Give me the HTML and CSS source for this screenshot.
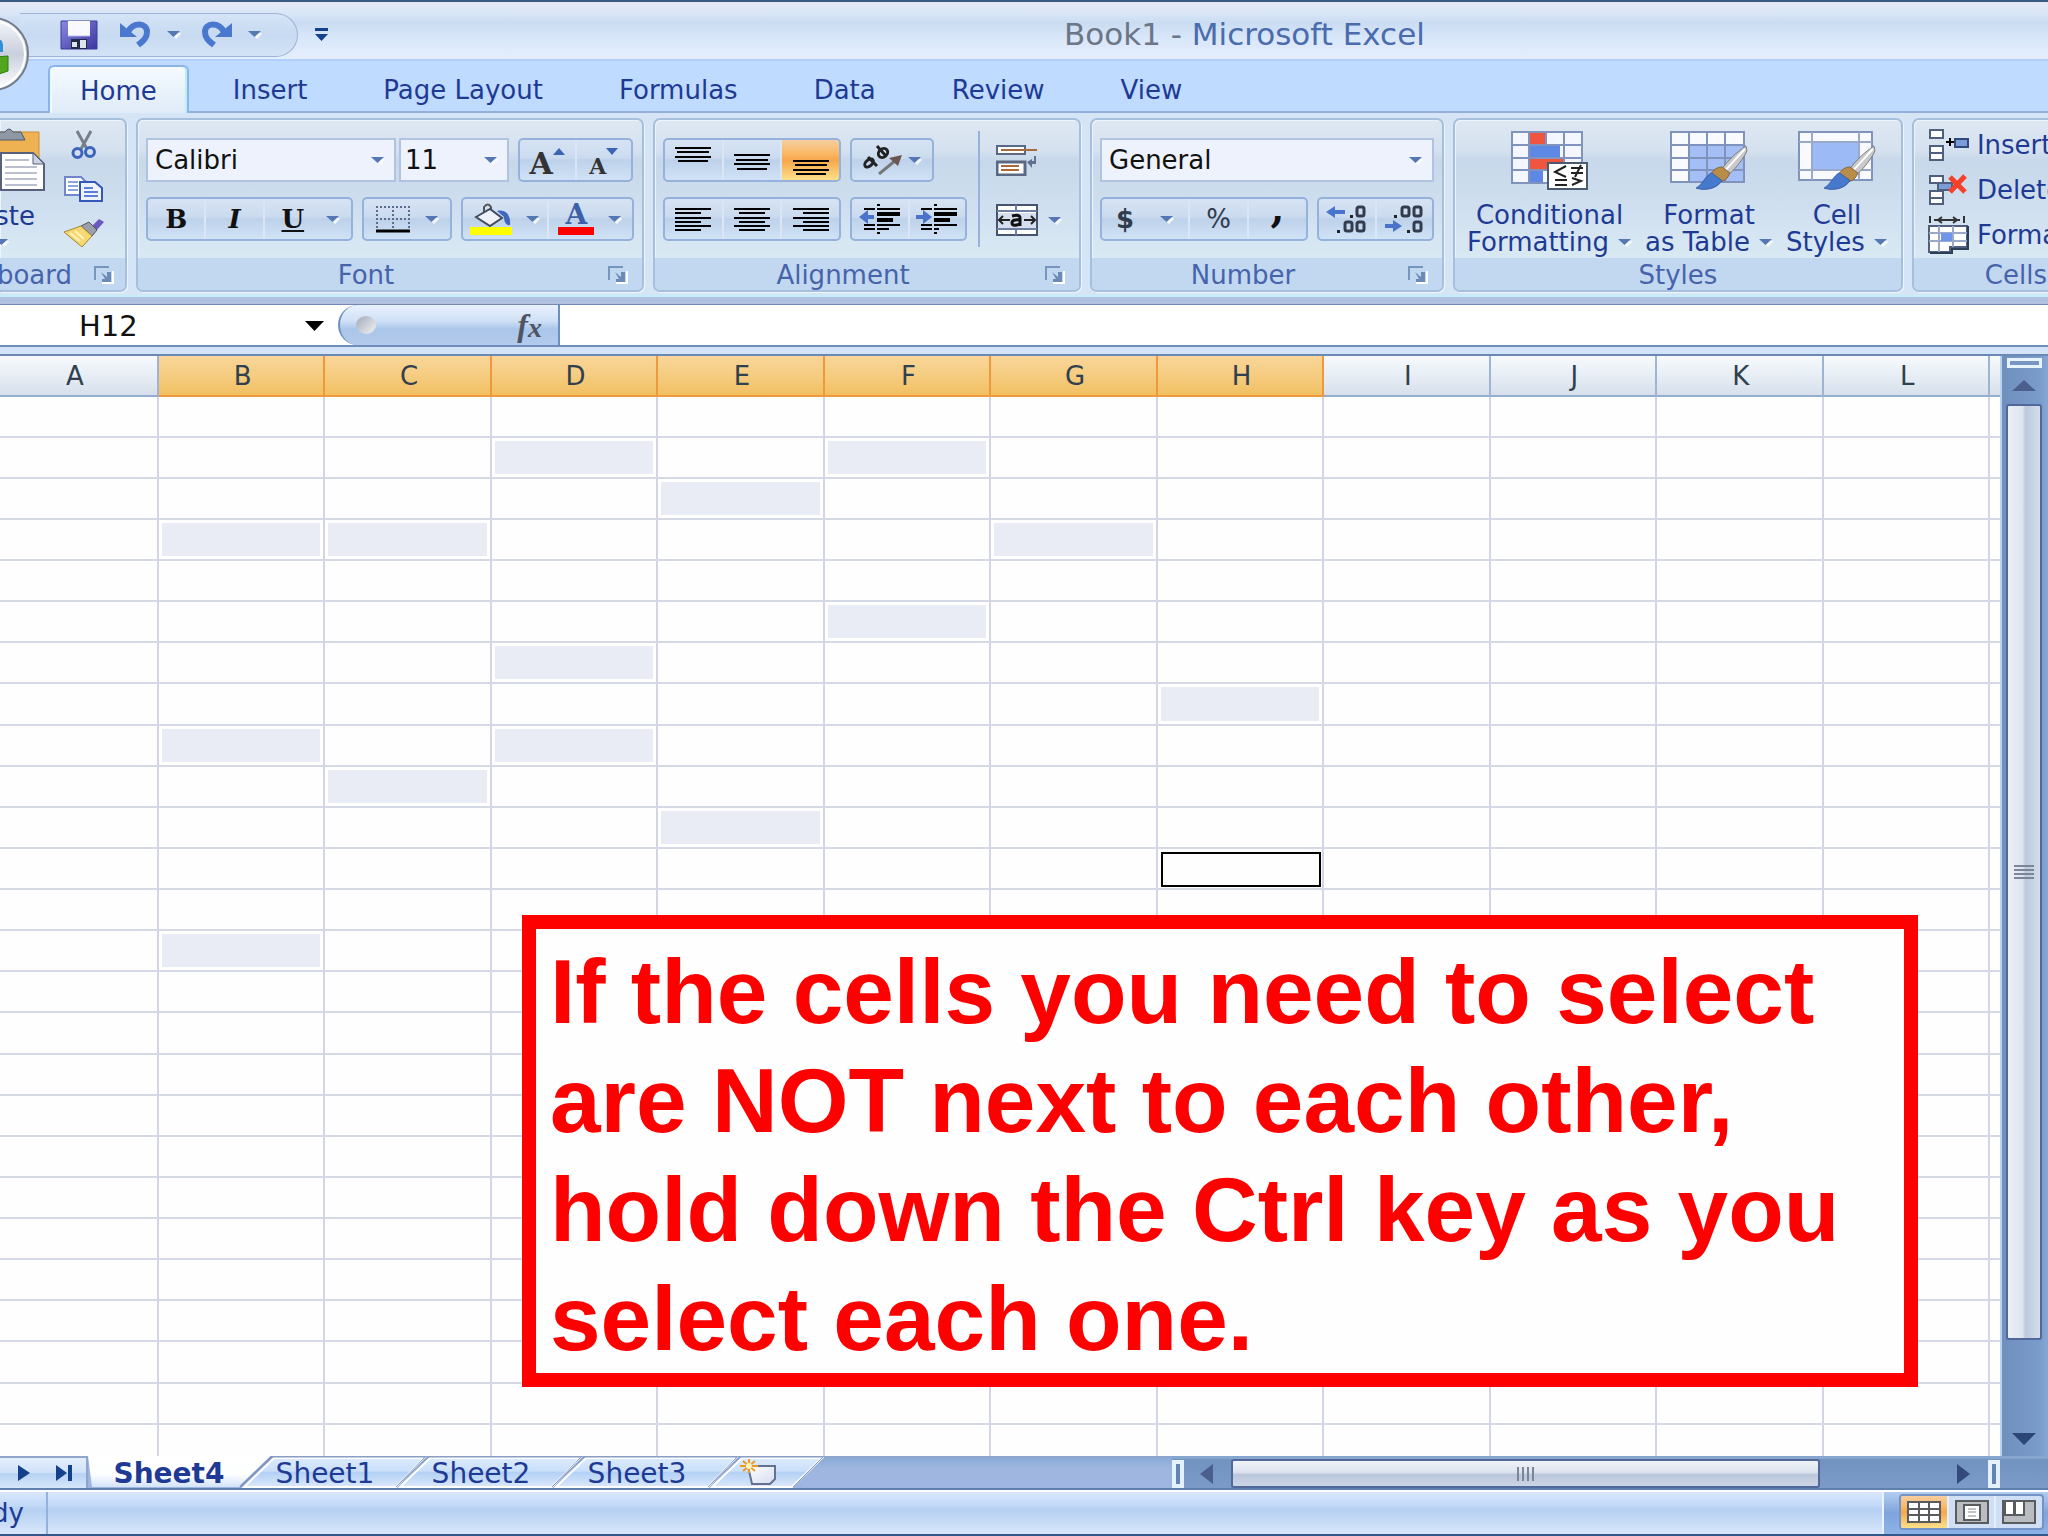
FILE: index.html
```html
<!DOCTYPE html>
<html lang="en">
<head>
<meta charset="utf-8">
<title>Book1 - Microsoft Excel</title>
<link rel="stylesheet" href="styles.css">
</head>
<body>
<svg class="defs" aria-hidden="true">
  <defs>
    <linearGradient id="paper" x1="0" y1="0" x2="1" y2="1"><stop offset="0" stop-color="#fff"/><stop offset="1" stop-color="#d5dcf0"/></linearGradient>
    <linearGradient id="tabfill" x1="0" y1="0" x2="0" y2="1"><stop offset="0" stop-color="#dcebfd"/><stop offset=".45" stop-color="#c9dffa"/><stop offset=".5" stop-color="#b3d1f5"/><stop offset="1" stop-color="#dbe8fb"/></linearGradient>
    <linearGradient id="tabon" x1="0" y1="0" x2="0" y2="1"><stop offset="0" stop-color="#fff"/><stop offset=".6" stop-color="#fdfeff"/><stop offset="1" stop-color="#d3e3f8"/></linearGradient>
    <linearGradient id="disk" x1="0" y1="0" x2="1" y2="1"><stop offset="0" stop-color="#8a8ae0"/><stop offset="1" stop-color="#3a35a0"/></linearGradient>
    <linearGradient id="orb" x1="0" y1="0" x2="0" y2="1"><stop offset="0" stop-color="#f6f8fc"/><stop offset=".5" stop-color="#c9cfdd"/><stop offset="1" stop-color="#fff"/></linearGradient>
  </defs>
  <symbol id="caret" viewBox="0 0 14 9"><path d="M3 3h12l-6 6z" fill="#fff" opacity=".8"/><path d="M0 1h13L6.500 7z" fill="#5578b5"/></symbol>
  <symbol id="launch" viewBox="0 0 20 18"><path d="M8 17h11V5" stroke="#fff" stroke-width="2" fill="none"/><path d="M1 14V1h14" stroke="#7796be" stroke-width="2" fill="none"/><path d="M7 6l6 5V6h4v10H8v-3h3z" fill="#6b8bb5"/></symbol>
  <symbol id="brush" viewBox="0 0 54 50"><path d="M53 3c-10 7-20 16-25 24l8 5C43 26 52 14 54 8z" fill="#c9c9cb" stroke="#777" stroke-width="1"/><path d="M52 6L32 28" stroke="#fff" stroke-width="2"/><path d="M28 25c-5 0-9 3-12 8l8 8c6-1 11-4 12-10z" fill="#b98d48" stroke="#7d6238"/><path d="M17 31c-6 3-9 12-16 16 9 3 22 1 27-8z" fill="#4678cc" stroke="#375fae"/></symbol>
</svg>

<header class="titlebar">
  <div class="quick">
    <button class="plain" aria-label="Save"><svg width="38" height="30" viewBox="0 0 38 30"><path d="M1 1h36v28H1z" fill="url(#disk)" stroke="#3c3a9c"/><path d="M8 1h22v15H8z" fill="#f8faff"/><path d="M8 16h22" stroke="#b8bce8"/><path d="M11 19h16v10H11z" fill="#222a4a"/><path d="M12 22h5v5h-5zM20 20h6v8h-6z" fill="#dfe3ee"/></svg></button>
    <button class="plain undo" aria-label="Undo"><svg width="33" height="27" viewBox="0 0 33 27"><path d="M9 11C14 1 28 1 28 11c0 6-4 9-9 13" fill="none" stroke="#4a78ce" stroke-width="6"/><path d="M1 2v14h17z" fill="#4a78ce"/></svg></button>
    <button class="plain" aria-label="Undo list"><svg width="14" height="9"><use href="#caret"/></svg></button>
    <button class="plain redo" aria-label="Redo"><svg width="33" height="27" viewBox="0 0 33 27"><path d="M24 11C19 1 5 1 5 11c0 6 4 9 9 13" fill="none" stroke="#4a78ce" stroke-width="6"/><path d="M32 2v14H15z" fill="#4a78ce"/></svg></button>
    <button class="plain" aria-label="Redo list"><svg width="14" height="9"><use href="#caret"/></svg></button>
  </div>
  <button class="plain more" aria-label="Customize toolbar"><svg width="15" height="14" viewBox="0 0 15 14"><path d="M1 1h13v3H1zM1 7h13l-6.500 7z" fill="#14408c"/></svg></button>
  <h1>Book1 - <span>Microsoft Excel</span></h1>
  <button class="plain orb" aria-label="Office button"><svg width="32" height="76" viewBox="0 0 32 76"><circle cx="-8" cy="38" r="36" fill="url(#orb)" stroke="#747c8c" stroke-width="2"/><circle cx="-8" cy="38" r="33" fill="none" stroke="#fff" stroke-width="2"/><path d="M-4 25q6-4 7 4v7h-8z" fill="#2f8fd8"/><path d="M-4 41l12-1v15l-12 4z" fill="#52a51e" stroke="#2f7d10"/></svg></button>
</header>

<nav class="tabs">
  <button class="tab on">Home</button><button class="tab">Insert</button><button class="tab">Page Layout</button><button class="tab">Formulas</button><button class="tab">Data</button><button class="tab">Review</button><button class="tab">View</button>
</nav>

<main class="ribbon">
  <section class="group clip">
    <div class="body">
      <button class="big paste"><svg width="52" height="64" viewBox="0 0 52 64"><path d="M0 4h46v52H0z" fill="#efb252" stroke="#c98d38"/><path d="M4 4h8q4-6 8 0h8l4 8H0z" fill="#8f97a5" stroke="#50586a"/><path d="M8 25h32l11 11v26H8z" fill="#fff" stroke="#57617b" stroke-width="2"/><path d="M40 25v11h11z" fill="#ccd3e2" stroke="#57617b"/><path d="M12 32h24M12 39h32M12 45h32M12 51h32M12 57h32" stroke="#b9bfcc" stroke-width="2"/></svg><span>Paste</span><svg class="dd" width="14" height="9"><use href="#caret"/></svg></button>
      <div class="stack">
        <button class="plain" aria-label="Cut"><svg width="26" height="30" viewBox="0 0 26 30"><path d="M6 1l10 18M20 1L10 19" stroke="#777e8c" stroke-width="3" fill="none"/><circle cx="6.500" cy="23" r="4.500" fill="none" stroke="#3c64bd" stroke-width="3"/><circle cx="19" cy="22" r="4.500" fill="none" stroke="#3c64bd" stroke-width="3"/></svg></button>
        <button class="plain" aria-label="Copy"><svg width="40" height="28" viewBox="0 0 40 28"><path d="M1 2h16l5 5v13H1z" fill="#fff" stroke="#6f86c8" stroke-width="2"/><path d="M4 7h10M4 11h10M4 15h10" stroke="#8ba5e0" stroke-width="2"/><path d="M16 7h15l7 6v13H16z" fill="#eef3ff" stroke="#3358b8" stroke-width="2"/><path d="M20 13h9M20 17h14M20 21h14" stroke="#5b80d8" stroke-width="2"/></svg></button>
        <button class="plain" aria-label="Format Painter"><svg width="42" height="30" viewBox="0 0 42 30"><path d="M28 9l8-8 5 3-8 9z" fill="#6a5bc0"/><path d="M18 8l8-4 8 8-5 6z" fill="#9a9faa" stroke="#555"/><path d="M18 8l11 10-10 11L1 14z" fill="#f6d872" stroke="#a88530"/><path d="M7 15l10 8M12 13l9 8" stroke="#fff3b8" stroke-width="2"/></svg></button>
      </div>
    </div>
    <footer><span>Clipboard</span><button class="plain launch" aria-label="Clipboard options"><svg width="20" height="18"><use href="#launch"/></svg></button></footer>
  </section>

  <section class="group font">
    <div class="body rows">
      <div class="row">
        <label class="combo family"><select aria-label="Font"><option>Calibri</option></select><svg width="14" height="9"><use href="#caret"/></svg></label>
        <label class="combo size"><select aria-label="Font size"><option>11</option></select><svg width="14" height="9"><use href="#caret"/></svg></label>
        <div class="set grow"><button aria-label="Grow font"><span class="serif g">A</span><svg class="mark" width="12" height="8" viewBox="0 0 12 8"><path d="M0 7h12L6 0z" fill="#3c64b4"/></svg></button><button aria-label="Shrink font"><span class="serif s">A</span><svg class="mark" width="12" height="8" viewBox="0 0 12 8"><path d="M0 0h12L6 7z" fill="#3c64b4"/></svg></button></div>
      </div>
      <div class="row wide">
        <div class="set biu"><button><b class="serif">B</b></button><button><b class="serif it">I</b></button><button><u class="serif">U</u></button><button aria-label="Underline styles" class="arrow"><svg width="14" height="9"><use href="#caret"/></svg></button></div>
        <div class="set borders"><button aria-label="Borders"><svg width="36" height="28" viewBox="0 0 36 28"><path d="M1 2h34M1 14h34M2 1v24M18 1v24M34 1v24" stroke="#5b6d8e" stroke-width="2" stroke-dasharray="2 2"/><path d="M1 26h34" stroke="#000" stroke-width="3"/></svg><svg width="14" height="9"><use href="#caret"/></svg></button></div>
        <div class="set fills"><button aria-label="Fill color"><svg width="42" height="32" viewBox="0 0 42 32"><path d="M14 14V4q4-5 7 0v9" fill="none" stroke="#555" stroke-width="2"/><path d="M6 14l14-8 12 9-12 8z" fill="#eef1f8" stroke="#444d60" stroke-width="2"/><path d="M27 8c8-2 14 3 13 14-4 1-6-4-6-8z" fill="#3f68bd"/><path d="M0 24h42v8H0z" fill="#ff0"/></svg><svg width="14" height="9"><use href="#caret"/></svg></button><button aria-label="Font color"><span class="ink serif">A</span><svg width="14" height="9"><use href="#caret"/></svg></button></div>
      </div>
    </div>
    <footer><span>Font</span><button class="plain launch" aria-label="Font options"><svg width="20" height="18"><use href="#launch"/></svg></button></footer>
  </section>

  <section class="group align">
    <div class="body">
      <div class="rows">
        <div class="row">
          <div class="set three"><button aria-label="Top align"><svg width="38" height="32" viewBox="0 0 38 32"><path d="M1 4h36M3 8h32M1 13h36M4 17h30" stroke="#000" stroke-width="2"/></svg></button><button aria-label="Middle align"><svg width="38" height="32" viewBox="0 0 38 32"><path d="M1 11h36M3 16h32M1 20h36M4 25h30" stroke="#000" stroke-width="2"/></svg></button><button class="hot" aria-label="Bottom align"><svg width="38" height="32" viewBox="0 0 38 32"><path d="M1 17h36M3 21h32M1 26h36M4 30h30" stroke="#000" stroke-width="2"/></svg></button></div>
          <div class="set orient"><button aria-label="Orientation"><svg width="42" height="30" viewBox="0 0 42 30"><g fill="none" stroke="#222" stroke-width="3"><ellipse cx="7" cy="18" rx="5" ry="3" transform="rotate(-40 7 18)"/><path d="M6 12l9 9M15 1l9 10"/><ellipse cx="21" cy="8" rx="5" ry="4" transform="rotate(-40 21 8)"/></g><path d="M17 29L34 15" stroke="#777" stroke-width="3"/><path d="M40 10l-13 3 9 8z" fill="#6a5555"/></svg><svg width="14" height="9"><use href="#caret"/></svg></button></div>
        </div>
        <div class="row">
          <div class="set three"><button aria-label="Align left"><svg width="38" height="26" viewBox="0 0 38 26"><path d="M1 3h36M1 7h26M1 12h36M1 16h26M1 20h36M1 24h26" stroke="#000" stroke-width="2"/></svg></button><button aria-label="Center"><svg width="38" height="26" viewBox="0 0 38 26"><path d="M1 3h36M6 7h26M1 12h36M6 16h26M1 20h36M6 24h26" stroke="#000" stroke-width="2"/></svg></button><button aria-label="Align right"><svg width="38" height="26" viewBox="0 0 38 26"><path d="M1 3h36M11 7h26M1 12h36M11 16h26M1 20h36M11 24h26" stroke="#000" stroke-width="2"/></svg></button></div>
          <div class="set indent"><button aria-label="Decrease indent"><svg width="42" height="32" viewBox="0 0 42 32"><path d="M5 6h11M18 6h23M5 22h11M18 22h23M5 26h11M18 26h12M18 2h3M18 30h3" stroke="#000" stroke-width="2"/><path d="M18 11h23M18 17h16" stroke="#000" stroke-width="4"/><path d="M0 14l9-7v5h6v4H9v5z" fill="#4a74cc"/></svg></button><button aria-label="Increase indent"><svg width="42" height="32" viewBox="0 0 42 32"><path d="M5 6h11M18 6h23M5 22h11M18 22h23M5 26h11M18 26h5M18 2h3M18 30h3" stroke="#000" stroke-width="2"/><path d="M18 11h23M18 17h16" stroke="#000" stroke-width="4"/><path d="M16 14L7 7v5H0v4h7v5z" fill="#4a74cc"/></svg></button></div>
        </div>
      </div>
      <div class="side">
        <button class="plain" aria-label="Wrap text"><svg width="42" height="32" viewBox="0 0 42 32"><path d="M1 2h28v8H1z" fill="#fff" stroke="#5a6884" stroke-width="2"/><path d="M5 6h36" stroke="#a66a3c" stroke-width="2"/><path d="M1 18h28v13H1z" fill="#fff" stroke="#5a6884" stroke-width="3"/><path d="M5 22h18M5 26h18" stroke="#a66a3c" stroke-width="2"/><path d="M40 12v8h-4v4l-5-6 5-3v2h2v-5z" fill="#5f7391"/></svg></button>
        <button class="plain merge" aria-label="Merge and center"><svg width="42" height="32" viewBox="0 0 42 32"><path d="M1 1h40v30H1z" fill="#fff" stroke="#46546e" stroke-width="2"/><path d="M1 7h40M1 25h40M20 1v6M20 25v6" stroke="#6d7fa5" stroke-width="2"/><path d="M2 9h38v15H2z" fill="#d5dff0"/><path d="M3 16h11M38 16H28M7 12l-4 4 4 4M35 12l4 4-4 4" stroke="#222" stroke-width="2" fill="none"/><path d="M16 12q8-2 8 2v8M24 16q-8-1-8 3t8 1" stroke="#111" stroke-width="3" fill="none"/></svg><svg width="14" height="9"><use href="#caret"/></svg></button>
      </div>
    </div>
    <footer><span>Alignment</span><button class="plain launch" aria-label="Alignment options"><svg width="20" height="18"><use href="#launch"/></svg></button></footer>
  </section>

  <section class="group number">
    <div class="body rows">
      <label class="combo"><select aria-label="Number format"><option>General</option></select><svg width="14" height="9"><use href="#caret"/></svg></label>
      <div class="row">
        <div class="set money"><button aria-label="Currency"><span class="bold">$</span><svg width="14" height="9"><use href="#caret"/></svg></button><button>%</button><button><span class="serif comma">,</span></button></div>
        <div class="set decimals"><button aria-label="Increase decimal"><svg width="42" height="30" viewBox="0 0 42 30"><g fill="none" stroke="#333c4e" stroke-width="3"><rect x="31" y="3" width="7" height="9" rx="2"/><rect x="19" y="18" width="7" height="9" rx="2"/><rect x="31" y="18" width="7" height="9" rx="2"/></g><path d="M24 11h3v3h-3zM11 26h3v3h-3z" fill="#222"/><path d="M0 8l9-6v4h10v4H9v4z" fill="#4a74cc"/></svg></button><button aria-label="Decrease decimal"><svg width="42" height="30" viewBox="0 0 42 30"><g fill="none" stroke="#333c4e" stroke-width="3"><rect x="19" y="3" width="7" height="9" rx="2"/><rect x="31" y="3" width="7" height="9" rx="2"/><rect x="31" y="18" width="7" height="9" rx="2"/></g><path d="M11 11h3v3h-3zM24 26h3v3h-3z" fill="#222"/><path d="M19 22l-9-6v4H2v4h8v4z" fill="#4a74cc"/></svg></button></div>
      </div>
    </div>
    <footer><span>Number</span><button class="plain launch" aria-label="Number options"><svg width="20" height="18"><use href="#launch"/></svg></button></footer>
  </section>

  <section class="group styles">
    <div class="body">
      <button class="big"><svg width="78" height="60" viewBox="0 0 78 60"><path d="M1 1h70v51H1z" fill="#f4f7ff"/><path d="M18 1h17v13H18zM18 27h34v12H18z" fill="#f0553f"/><path d="M18 14h31v13H18zM18 39h14v12H18z" fill="#5d89e4"/><path d="M1 14h70M1 27h70M1 39h70M18 1v51M35 1v13M53 1v51M1 1h70v51H1z" stroke="#7f93bd" stroke-width="2" fill="none"/><path d="M37 32h39v26H37z" fill="#fff" stroke="#4c5a70" stroke-width="2"/><path d="M55 35l-11 6 11 5M44 49h12M44 54h12M60 37h12M60 42h12M70 34l-6 12M61 47l9 3-9 4" stroke="#222" stroke-width="2" fill="none"/></svg><span>Conditional</span><span>Formatting <svg width="14" height="9"><use href="#caret"/></svg></span></button>
      <button class="big"><svg width="78" height="60" viewBox="0 0 78 60"><path d="M1 1h73v50H1z" fill="#f8faff"/><path d="M19 14h55v37H19z" fill="#a4bff5"/><path d="M1 1h73v50H1zM1 14h73M1 27h73M1 39h73M19 1v50M37 1v50M55 1v50" stroke="#7f93bd" stroke-width="2" fill="none"/><use href="#brush" x="24" y="12" width="54" height="48"/></svg><span>Format</span><span>as Table <svg width="14" height="9"><use href="#caret"/></svg></span></button>
      <button class="big"><svg width="78" height="60" viewBox="0 0 78 60"><path d="M1 1h73v48H1z" fill="#f8faff" stroke="#7f93bd" stroke-width="2"/><path d="M14 11h47v28H14z" fill="#9bbaf6"/><path d="M1 11h73M1 39h73M14 1v48M61 1v48" stroke="#9aa9c9" stroke-width="2"/><use href="#brush" x="24" y="12" width="54" height="48"/></svg><span>Cell</span><span>Styles <svg width="14" height="9"><use href="#caret"/></svg></span></button>
    </div>
    <footer><span>Styles</span></footer>
  </section>

  <section class="group cells">
    <div class="body">
      <button class="item"><svg width="42" height="34" viewBox="0 0 42 34"><path d="M2 2h13v8H2zM2 18h13v7H2zM2 25h13v7H2z" fill="#fff" stroke="#4f5f7d" stroke-width="2"/><path d="M27 11h13v8H27z" fill="#7b9cd6" stroke="#2f4a7d" stroke-width="2"/><path d="M18 14h8M22 10v8" stroke="#000" stroke-width="2"/></svg>Insert</button>
      <button class="item"><svg width="42" height="34" viewBox="0 0 42 34"><path d="M2 3h13v7H2zM2 18h13v7H2zM2 25h13v6H2z" fill="#fff" stroke="#4f5f7d" stroke-width="2"/><path d="M10 10h14v7H10z" fill="#7b9cd6" stroke="#4f5f7d" stroke-width="2"/><path d="M22 4l15 15M37 3L22 19" stroke="#f5402a" stroke-width="5"/></svg>Delete</button>
      <button class="item"><svg width="42" height="38" viewBox="0 0 42 38"><path d="M2 0v7M36 0v7M6 4h26M14 1l-4 3 4 3M25 1l4 3-4 3" stroke="#333" stroke-width="2" fill="none"/><path d="M1 10h38v21H22v5H1z" fill="#fff" stroke="#4f5f7d" stroke-width="2"/><path d="M1 17h38M1 25h38M11 10v26M25 10v21" stroke="#9aa9c9" stroke-width="2"/><path d="M13 17h11v8H13z" fill="#6f96ea"/><path d="M40 10v23H24v4H2" stroke="#2c3f58" stroke-width="2" fill="none"/></svg>Format</button>
    </div>
    <footer><span>Cells</span></footer>
  </section>
</main>

<div class="formula">
  <input class="name" aria-label="Name box" value="H12">
  <button class="plain pick" aria-label="Name list"><svg width="20" height="10" viewBox="0 0 20 10"><path d="M0 0h19l-9.500 10z" fill="#000"/></svg></button>
  <div class="fx"><i class="knob"></i><button class="plain fn">f<small>x</small></button></div>
  <input class="entry" aria-label="Formula">
</div>

<div class="work">
  <div class="sheet">
    <table>
      <colgroup><col class="first"><col span="11"><col class="last"></colgroup>
      <thead><tr><th>A</th><th class="lit">B</th><th class="lit">C</th><th class="lit">D</th><th class="lit">E</th><th class="lit">F</th><th class="lit">G</th><th class="lit">H</th><th>I</th><th>J</th><th>K</th><th>L</th><th></th></tr></thead>
      <tbody id="cells"></tbody>
    </table>
  </div>
  <div class="vbar">
    <div class="split"></div>
    <button class="plain" aria-label="Scroll up"><svg width="24" height="12" viewBox="0 0 24 12"><path d="M0 11h24L12 0z" fill="#4b5f8c"/></svg></button>
    <div class="vthumb"><svg width="20" height="16" viewBox="0 0 20 16"><path d="M0 2h20M0 6h20M0 10h20M0 14h20" stroke="#7d8698" stroke-width="2"/></svg></div>
    <button class="plain down" aria-label="Scroll down"><svg width="24" height="12" viewBox="0 0 24 12"><path d="M0 0h24L12 12z" fill="#2c4677"/></svg></button>
  </div>
  <aside class="callout">If the cells you need to select are NOT next to each other, hold down the Ctrl key as you select each one.</aside>
</div>

<div class="bottom">
  <div class="nav"><button class="plain" aria-label="Next sheet"><svg width="12" height="16" viewBox="0 0 12 16"><path d="M0 0l12 8-12 8z" fill="#14408c"/></svg></button><button class="plain" aria-label="Last sheet"><svg width="16" height="16" viewBox="0 0 16 16"><path d="M0 0l11 8-11 8zM12 0h4v16h-4z" fill="#14408c"/></svg></button></div>
  <div class="sheets">
    <button class="st on"><svg width="184" height="32" viewBox="0 0 184 32"><path d="M0 0h184l-32 31H4z" fill="url(#tabon)"/><path d="M184 0l-32 31" stroke="#7f93bd" stroke-width="2"/></svg><span>Sheet4</span></button>
    <button class="st"><svg width="186" height="32" viewBox="0 0 186 32"><path d="M4 31L34 2h150l-28 29z" fill="url(#tabfill)" stroke="#fff" stroke-width="2"/><path d="M2 29L32 1h153l-29 30" fill="none" stroke="#8799bf"/></svg><span>Sheet1</span></button>
    <button class="st"><svg width="186" height="32" viewBox="0 0 186 32"><path d="M4 31L34 2h150l-28 29z" fill="url(#tabfill)" stroke="#fff" stroke-width="2"/><path d="M2 29L32 1h153l-29 30" fill="none" stroke="#8799bf"/></svg><span>Sheet2</span></button>
    <button class="st"><svg width="186" height="32" viewBox="0 0 186 32"><path d="M4 31L34 2h150l-28 29z" fill="url(#tabfill)" stroke="#fff" stroke-width="2"/><path d="M2 29L32 1h153l-29 30" fill="none" stroke="#8799bf"/></svg><span>Sheet3</span></button>
    <button class="st" aria-label="Insert worksheet"><svg width="116" height="32" viewBox="0 0 116 32"><path d="M4 31L34 2h80L84 31z" fill="url(#tabfill)" stroke="#fff" stroke-width="2"/><path d="M2 29L32 1h83L85 31" fill="none" stroke="#8799bf"/><path d="M40 10h27v13l-5 5H44z" fill="url(#paper)" stroke="#66718f" stroke-width="2"/><path d="M41 3v14M32 10h18M35 5l12 10M47 5L35 15" stroke="#ee9a20" stroke-width="2"/><circle cx="41" cy="10" r="3" fill="#fff3c0"/></svg></button>
  </div>
  <div class="hbar">
    <div class="grip"></div>
    <button class="plain" aria-label="Scroll left"><svg width="13" height="20" viewBox="0 0 13 20"><path d="M13 0v20L0 10z" fill="#4b5f8c"/></svg></button>
    <div class="hthumb"><svg width="20" height="14" viewBox="0 0 20 14"><path d="M2 0v14M7 0v14M12 0v14M17 0v14" stroke="#7d8698" stroke-width="2"/></svg></div>
    <button class="plain right" aria-label="Scroll right"><svg width="13" height="20" viewBox="0 0 13 20"><path d="M0 0v20l13-10z" fill="#34497c"/></svg></button>
    <div class="grip"></div>
  </div>
</div>

<footer class="status">
  <div class="ready"><span>Ready</span></div>
  <div class="views">
    <div class="viewset">
      <button class="hot" aria-label="Normal"><svg width="34" height="22" viewBox="0 0 34 22"><path d="M1 1h32v20H1z" fill="#fff"/><path d="M1 1h32v20H1zM1 8h32M1 14h32M12 1v20M22 1v20" fill="none" stroke="#595b5f" stroke-width="2"/></svg></button>
      <button aria-label="Page layout"><svg width="34" height="24" viewBox="0 0 34 24"><path d="M1 1h32v22H1z" fill="#b9bcc0" stroke="#595b5f" stroke-width="2"/><path d="M9 5h16v15H9z" fill="#fff" stroke="#595b5f" stroke-width="2"/><path d="M13 9h8M13 12h8M13 16h8" stroke="#888"/></svg></button>
      <button aria-label="Page break preview"><svg width="34" height="24" viewBox="0 0 34 24"><path d="M1 1h32v22H1z" fill="#b9bcc0" stroke="#595b5f" stroke-width="2"/><path d="M3 1h9v14H3zM13 1h9v14h-9z" fill="#fff" stroke="#595b5f" stroke-width="2"/></svg></button>
    </div>
  </div>
</footer>
<script src="script.js"></script>
</body>
</html>
```
FILE: styles.css
```css
* { box-sizing: border-box; }
body {
  margin: 0;
  height: 100vh;
  display: flex;
  flex-direction: column;
  overflow: hidden;
  border-top: 2px solid #3b5a82;
  border-bottom: 2px solid #34588a;
  background: #cfe0f5;
  font: 26px/28px "DejaVu Sans", sans-serif;
  color: #1e3a94;
}
button, input, select { font: inherit; color: inherit; margin: 0; padding: 0; border: 0; background: none; border-radius: 0; }
svg { display: block; flex: none; }
.defs { position: absolute; width: 0; height: 0; }
.plain { display: flex; align-items: center; }

/* title bar */
.titlebar {
  position: relative;
  flex: none;
  height: 59px;
  display: flex;
  align-items: center;
  padding-left: 20px;
  border-bottom: 2px solid #b0cffa;
  background: linear-gradient(#e6eaf5, #d8e6f7 20%, #cadcf2 36%, #d9e7fa 65%, #e5eefd);
}
.quick {
  display: flex;
  align-items: center;
  width: 278px;
  height: 44px;
  margin-top: 8px;
  padding-left: 40px;
  border: 1px solid #9fb4d4;
  border-left: 0;
  border-radius: 0 22px 22px 0;
  background: linear-gradient(#d5e4f6, #c7daf1 50%, #d3e3f7);
}
.undo { margin-left: 21px; }
.redo { margin-left: 19px; }
.quick .undo + .plain, .quick .redo + .plain { margin-left: 15px; }
.more { margin-left: 16px; margin-top: 6px; }
h1 { flex: 1; margin: 6px 0 0; padding-left: 735px; font-size: 31px; font-weight: 400; color: #6c7686; white-space: nowrap; }
h1 span { color: #4a6bac; }
.orb { position: absolute; left: 0; top: 14px; z-index: 2; }

/* ribbon tabs */
.tabs {
  flex: none;
  height: 52px;
  display: flex;
  align-items: flex-end;
  gap: 12px;
  padding-left: 48px;
  border-bottom: 2px solid #94afda;
  background: #bfdbff;
}
.tab { height: 46px; padding: 2px 30px 0; border: 2px solid transparent; border-bottom: 0; white-space: nowrap; }
.tab.on { border-color: #8db4e8; border-radius: 6px 6px 0 0; margin-bottom: -2px; height: 48px; background: linear-gradient(#f5faff, #dfebf8); box-shadow: inset 2px 0 #e9fbff, inset -2px 0 #b9f0ff; }

/* ribbon */
.ribbon {
  flex: none;
  height: 184px;
  display: flex;
  gap: 9px;
  padding: 5px 0 4px;
  overflow: hidden;
  border-bottom: 2px solid #c4effa;
  background: #d6e5f5;
}
.group {
  flex: none;
  display: flex;
  flex-direction: column;
  height: 174px;
  border: 2px solid #a5bfdc;
  border-radius: 7px;
  overflow: hidden;
  background: linear-gradient(#dee8f3, #d5e1ef 18%, #c7d8ea 24%, #d0e0f0 55%, #d9e9f3 80%);
  box-shadow: inset 1px 1px #edf4fb, 1px 1px #eef6fd;
}
.group .body { flex: 1; display: flex; }
.group footer {
  flex: none;
  height: 32px;
  padding-top: 2px;
  display: grid;
  grid-template-columns: 1fr 48px;
  align-items: center;
  text-align: center;
  background: #c1d8f0;
  color: #4763ab;
}
.launch { height: 22px; justify-self: end; margin-right: 14px; }
.clip { width: 127px; border-left: 0; border-radius: 0 7px 7px 0; }
.clip .body { justify-content: flex-end; gap: 20px; padding-right: 20px; }
.clip footer { display: flex; justify-content: flex-end; gap: 22px; padding-right: 11px; }
.clip .launch { margin: 0; }
.stack { display: flex; flex-direction: column; align-items: center; justify-content: space-between; width: 42px; padding: 10px 0; }
.big { display: flex; flex-direction: column; align-items: center; padding-top: 11px; line-height: 27px; }
.big > svg:first-child { margin-bottom: 11px; }
.big span { display: flex; align-items: center; gap: 9px; white-space: nowrap; }
.clip .big { align-items: flex-end; flex: none; padding-top: 8px; margin-right: -2px; }
.clip .big span { padding-right: 10px; }
.big .dd { margin: 8px 36px 0 0; }
.rows { display: flex; flex-direction: column; gap: 15px; padding: 18px 8px 0 8px; }
.row { display: flex; gap: 9px; }
.font .row:first-child { gap: 3px; }
.font .grow { margin-left: 6px; }

.combo { display: grid; align-items: center; height: 44px; border: 2px solid #b0c4e2; background: #edf2fc; color: #111; }
.combo select { grid-area: 1 / 1; width: 100%; height: 100%; padding-left: 7px; appearance: none; }
.combo svg { grid-area: 1 / 1; justify-self: end; margin-right: 9px; pointer-events: none; }
.family { width: 250px; }
.size { width: 110px; }
.size select { padding-left: 4px; }

.set {
  display: flex;
  height: 44px;
  border: 2px solid #94b2db;
  border-radius: 5px;
  overflow: hidden;
  background: linear-gradient(#d6e3f3, #cbdbef 45%, #bdd1ea 50%, #d0e2f5);
}
.set button { flex: 1; display: flex; align-items: center; justify-content: center; gap: 14px; color: #333c4c; border-left: 2px solid #dae6f5; }
.set button:first-child { border-left: 0; }
.set button.arrow { flex: none; width: 30px; border: 0; padding-right: 6px; }
.set .hot, .viewset .hot { background: linear-gradient(#f5cfa0, #fbb763 35%, #f7a64a 50%, #fbe08a); }
.serif { font-family: "DejaVu Serif", serif; font-weight: 700; color: #111; }
.it { font-style: italic; }
.grow { width: 115px; }
.grow button { align-items: flex-start; gap: 0; }
.grow .serif { color: #333; line-height: 40px; }
.g { font-size: 30px; padding-top: 4px; }
.s { font-size: 22px; padding-top: 6px; }
.mark { margin-top: 8px; }
.biu { width: 207px; }
.borders { width: 90px; }
.fills { width: 173px; }
.fills button { gap: 14px; }
.fills .ink { width: 36px; color: #3c5fa8; font-size: 28px; line-height: 24px; border-bottom: 8px solid #f00; }

.align .body { gap: 11px; }
.align .rows { padding-right: 0; }
.three { width: 178px; }
.orient { width: 84px; }
.orient button { gap: 4px; }
.indent { width: 117px; }
.side { display: flex; flex-direction: column; gap: 28px; margin-top: 11px; padding: 13px 17px 0 16px; height: 116px; border-left: 2px solid #94b2db; }
.merge { gap: 10px; }

.money { width: 208px; }
.money .bold { font-weight: 700; }
.money button:first-child { flex: none; width: 86px; gap: 26px; }
.money .comma { font-size: 40px; padding-bottom: 22px; }
.decimals { width: 117px; }

.styles .body { gap: 13px; padding: 0 13px 0 12px; }
.group.styles footer, .group.cells footer { grid-template-columns: 1fr; }
.cells { width: 240px; }
.cells .body { flex-direction: column; justify-content: space-between; padding: 6px 0 4px 14px; }
.item { display: flex; align-items: center; gap: 7px; height: 38px; }
.cells footer { padding-right: 32px; }

/* formula bar */
.formula {
  flex: none;
  height: 57px;
  display: flex;
  align-items: stretch;
  border-top: 7px solid #b1c1e2;
  border-bottom: 7px solid #d3e4f8;
  background: #fff;
  box-shadow: inset 0 1px #7488b4, inset 0 -2px #6f8fbb;
  color: #111;
}
.formula input { background: transparent; outline: 0; min-width: 0; }
.name { width: 300px; padding-left: 79px; font-size: 29px; }
.pick { width: 38px; padding-left: 5px; }
.fx {
  width: 222px;
  margin: 1px 0 2px;
  display: flex;
  align-items: center;
  justify-content: space-between;
  padding: 0 16px;
  border: 2px solid #6c8fbf;
  border-width: 0 2px 0 2px;
  border-radius: 20px 0 0 20px;
  background: linear-gradient(#e9f2fd, #cfe0f6 40%, #aac6ea 60%, #b3cbec);
}
.knob { width: 20px; height: 18px; border-radius: 50%; background: linear-gradient(135deg, #a2a8b5, #f2f4f8); }
.fn { font: italic 700 32px/34px "Liberation Serif", serif; color: #505462; }
.fn small { font-size: 28px; padding-top: 6px; }
.entry { flex: 1; }

/* worksheet */
.work { position: relative; flex: 1; min-height: 0; display: flex; border-top: 2px solid #6a8ab5; }
.sheet { flex: 1; overflow: hidden; background: #fefeff; }
table { width: 100%; table-layout: fixed; border-collapse: separate; border-spacing: 0; }
.first { width: 159px; }
.last { width: 10px; }
th, td { padding: 0; border-right: 2px solid #d3d5e7; border-bottom: 2px solid #d5d8e5; }
th {
  height: 41px;
  padding-left: 3px;
  font-weight: 400;
  color: #30404e;
  border-right-color: #9fb4d2;
  border-bottom-color: #93aed0;
  background: linear-gradient(#f6fafd, #e4ebf3 60%, #d6dfeb);
}
th:first-child { padding-right: 10px; }
th.lit { border-color: #ee9a3c; background: linear-gradient(#f9d69a, #f5cc80 50%, #f2c062); }
tr th:last-child, tr td:last-child { border-right: 0; }
td { height: 41px; }
tr:nth-child(8n) td { height: 42px; }
.sel { background: #e9ebf5; box-shadow: inset 0 0 0 3px #fff; }
.active { outline: 2px solid #000; outline-offset: -5px; }

.vbar {
  flex: none;
  width: 48px;
  display: flex;
  flex-direction: column;
  align-items: center;
  padding: 2px 6px 11px 4px;
  border-left: 2px solid #b9d3f2;
  background: linear-gradient(90deg, #6f8fbd, #7a9cca 80%, #86a6d6);
}
.split { width: 35px; height: 10px; border: 3px solid #e8f4ff; background: #7796c2; }
.vbar .plain { margin-top: 12px; }
.vthumb {
  flex: 1;
  width: 100%;
  display: flex;
  align-items: center;
  justify-content: center;
  margin: 12px 0 81px;
  border: 2px solid #53689a;
  border-radius: 3px;
  background: linear-gradient(90deg, #eceff6, #dfe5ef 45%, #bcc9dc 55%, #d4deec);
}

.callout {
  position: absolute;
  left: 522px;
  top: 559px;
  width: 1396px;
  padding: 8px 14px 0 14px;
  border: 14px solid #f00;
  background: #fefeff;
  color: #f00;
  font: 700 91px/109px "Liberation Sans", sans-serif;
}

/* sheet tabs and horizontal scroll bar */
.bottom {
  flex: none;
  height: 34px;
  display: flex;
  border-bottom: 2px solid #5f7fae;
  background: linear-gradient(#86a9d6, #9fb6e0 40%, #9db5e0);
  font-size: 28px;
}
.nav { width: 88px; display: flex; align-items: center; gap: 26px; padding-left: 18px; border: 2px solid #8fa6cc; border-width: 2px 2px 0 0; background: linear-gradient(#e4effd, #cfe1f8 50%, #b6d2f4 52%, #d6e6fa); }
.sheets { flex: 1; display: flex; box-shadow: inset 0 2px #8fa6cc; }
.st { display: grid; align-items: center; margin-left: -30px; }
.st svg, .st span { grid-area: 1 / 1; }
.st span { padding: 3px 16px 0 0; }
.st.on { margin: 0; font-weight: 700; z-index: 1; }
.st.on span { padding-right: 22px; }
.st.on + .st { margin-left: -32px; }
.hbar { width: 876px; display: flex; align-items: center; padding: 3px 48px 0 0; background: linear-gradient(#86a6cf 3px, #7193c0 3px, #7b9ac8); }
.grip { width: 12px; height: 28px; border: 4px solid #e4f2ff; background: #6584b4; }
.hbar .plain { width: 47px; padding-left: 16px; }
.hthumb { flex: 1; height: 29px; display: flex; align-items: center; justify-content: center; border: 2px solid #53689a; border-radius: 3px; background: linear-gradient(#eff2f7, #dce3ee 45%, #bac6da 55%, #ccd6e6); }
.hbar .right { width: 168px; padding-left: 137px; }

/* status bar */
.status {
  flex: none;
  height: 44px;
  display: flex;
  justify-content: space-between;
  border-top: 2px solid #fff;
  background: linear-gradient(#d9e7fc, #c4daf8 30%, #b5d0f2 42%, #c9ddf7 75%, #d9e7fb);
}
.ready { width: 48px; display: flex; align-items: center; justify-content: flex-end; overflow: hidden; padding-right: 22px; border-right: 2px solid #94b2db; }
.views { width: 166px; padding: 2px 4px 4px 15px; border-left: 2px solid #eaf3ff; background: linear-gradient(#b3cdf0, #7fa4dc 50%, #8eb3e8); }
.viewset { display: flex; height: 100%; border: 2px solid #7593c4; border-radius: 4px; background: #cfe0f6; overflow: hidden; }
.viewset button { flex: 1; display: flex; align-items: center; justify-content: center; border-right: 2px solid #e6f0fc; }
.viewset button:last-child { border: 0; }
```
FILE: script.js
```js
// Fill the worksheet body; picked cells are listed by row number.
const picked = { 2: "DF", 3: "E", 4: "BCG", 6: "F", 7: "D", 8: "H", 9: "BD", 10: "C", 11: "E", 14: "B" };
const body = document.getElementById("cells");
for (let r = 1; r <= 26; r++) {
  const row = body.insertRow();
  for (const c of "ABCDEFGHIJKL ") {
    const cell = row.insertCell();
    if (c !== " " && (picked[r] || "").includes(c)) cell.className = "sel";
    if (r === 12 && c === "H") cell.className = "active";
  }
}
```
